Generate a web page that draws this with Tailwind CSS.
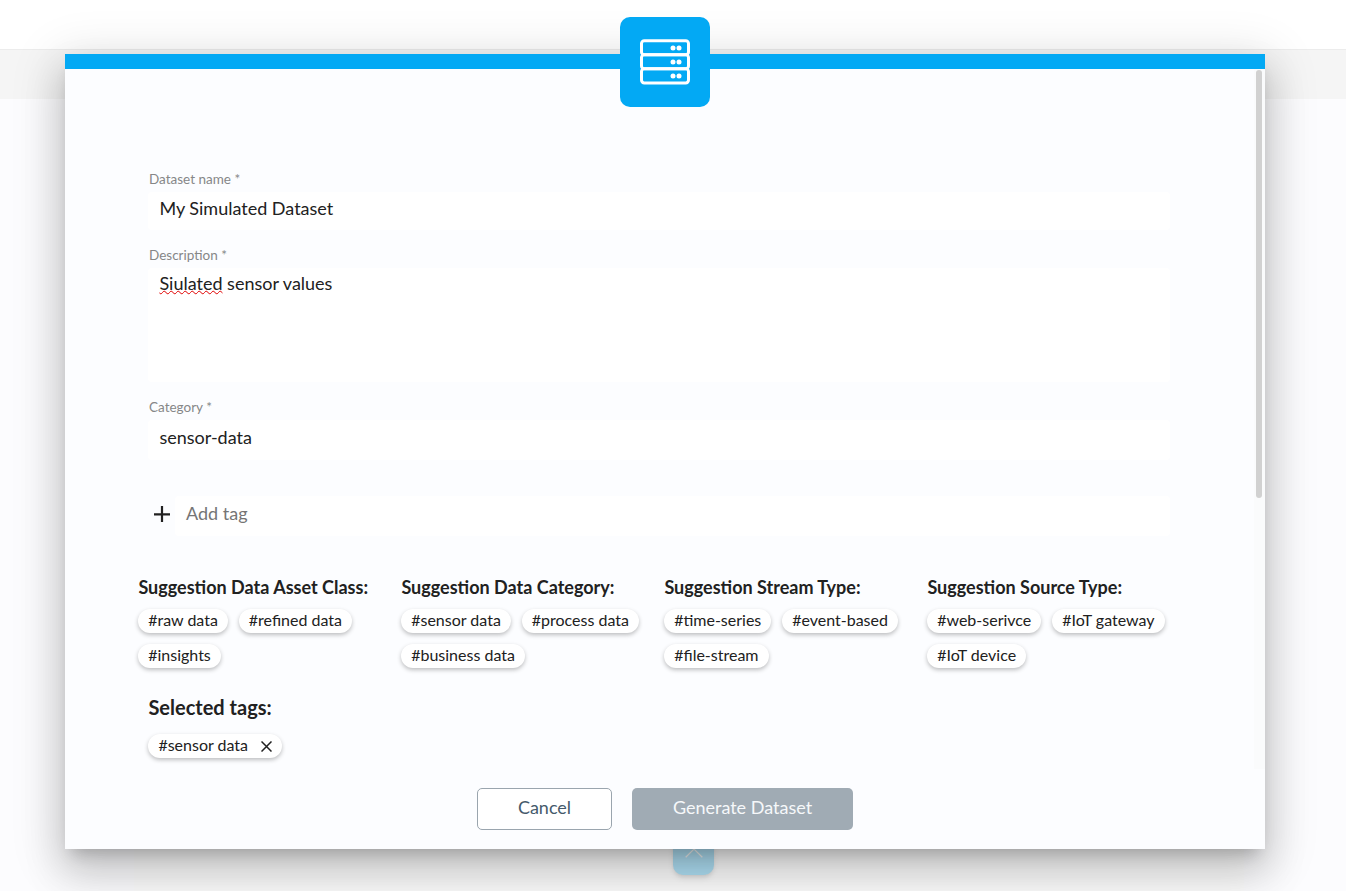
<!DOCTYPE html>
<html lang="en">
<head>
<meta charset="utf-8">
<title>Generate Dataset</title>
<script src="https://cdn.jsdelivr.net/npm/@tailwindcss/browser@4"></script>
</head>
<body class="relative h-[891px] w-[1346px] overflow-hidden bg-[#fcfcfe] font-['Lato',sans-serif] text-[#212121] antialiased">
  <!-- Page behind the dialog -->
  <div class="flex h-full flex-col">
    <div class="h-[50px] border-b border-[#ececec] bg-white"></div>
    <div class="h-[49px] bg-[#f5f5f5]"></div>
    <div class="mx-auto mt-[620px] w-[1110px] flex-1 translate-x-[16px] bg-[#fcfcfc]"></div>
  </div>
  <div class="absolute left-[673px] top-[834px] flex h-[41px] w-[41px] justify-center rounded-[10px] bg-[#afe0f5] shadow-md">
    <svg class="mt-[14px] h-[10px] w-[18px]" viewBox="0 0 18 10" fill="none" stroke="#f4f4f4" stroke-width="1.200"><path d="M0.7 9.2 9 1l8.300 8.200"/></svg>
  </div>

  <!-- Dialog -->
  <section class="absolute left-[65px] top-[54px] flex h-[795px] w-[1200px] flex-col bg-[#fcfdff] shadow-[0_11px_15px_-7px_rgba(0,0,0,0.2),0_24px_38px_3px_rgba(0,0,0,0.14),0_9px_46px_8px_rgba(0,0,0,0.12)]">
    <div class="h-[15px] shrink-0 bg-[#03a9f4]"></div>
    <div class="absolute left-[555px] top-[-37px] flex size-[90px] items-center justify-center rounded-[10px] bg-[#03a9f4]">
      <svg class="h-[46px] w-[50px]" viewBox="0 0 50 46" fill="none" stroke="#fff" stroke-width="3">
        <rect x="1.500" y="1.700" width="47" height="14" rx="2.800"/>
        <rect x="1.500" y="15.700" width="47" height="14" rx="2.800"/>
        <rect x="1.500" y="29.700" width="47" height="14.200" rx="2.800"/>
        <g fill="#fff" stroke="none"><circle cx="33" cy="9" r="2.500"/><circle cx="39" cy="9" r="2.500"/><circle cx="33" cy="23" r="2.500"/><circle cx="39" cy="23" r="2.500"/><circle cx="33" cy="37" r="2.500"/><circle cx="39" cy="37" r="2.500"/></g>
      </svg>
    </div>

    <div class="flex h-[700px] shrink-0">
      <div class="flex w-[1189px] flex-col pl-[73px] pt-[101px]">
        <div class="ml-[10px] flex w-[1022px] flex-col">
          <label class="h-[22px] pl-px text-[13.500px] leading-[18px] text-[#868788]">Dataset name *</label>
          <div class="h-[38px] rounded bg-white pl-[11.400px] text-[18px] leading-[33px]">My Simulated Dataset</div>
          <label class="mt-[16px] h-[22px] pl-px text-[13.500px] leading-[18px] text-[#868788]">Description *</label>
          <div class="h-[114px] rounded bg-white pl-[11.400px] text-[18px] leading-[30px]"><span class="underline decoration-[#e00000] decoration-wavy decoration-1 underline-offset-[0px] [text-decoration-skip-ink:none]">Siulated</span> sensor values</div>
          <label class="mt-[16px] h-[22px] pl-px text-[13.500px] leading-[18px] text-[#868788]">Category *</label>
          <div class="h-[40px] rounded bg-white pl-[11.400px] text-[18px] leading-[35px]">sensor-data</div>
          <div class="mt-[36px] flex h-[40px]">
            <svg class="ml-[6px] mr-[5px] mt-[10px] size-[16px]" viewBox="0 0 16 16" stroke="#212121" stroke-width="2.200"><path d="M8 0v16M0 8.300h16"/></svg>
            <div class="flex-1 rounded bg-white pl-[11px] text-[18px] leading-[35px] text-[#757575]">Add tag</div>
          </div>
        </div>

        <div class="mt-[40px] grid w-[1052px] grid-cols-4">
          <div>
            <h3 class="whitespace-nowrap pl-[0.400px] text-[18px] font-bold leading-[22px]">Suggestion Data Asset Class:</h3>
            <div class="mt-[11px] flex flex-wrap gap-x-[10.500px] gap-y-[11px] text-[16px] leading-[22px]">
              <span class="h-[24px] rounded-full bg-white px-[10.200px] shadow-[0_2px_4px_rgba(0,0,0,0.25)]">#raw data</span>
              <span class="h-[24px] rounded-full bg-white px-[10.200px] shadow-[0_2px_4px_rgba(0,0,0,0.25)]">#refined data</span>
              <span class="h-[24px] rounded-full bg-white px-[10.200px] shadow-[0_2px_4px_rgba(0,0,0,0.25)]">#insights</span>
            </div>
          </div>
          <div>
            <h3 class="whitespace-nowrap pl-[0.400px] text-[18px] font-bold leading-[22px]">Suggestion Data Category:</h3>
            <div class="mt-[11px] flex flex-wrap gap-x-[10.500px] gap-y-[11px] text-[16px] leading-[22px]">
              <span class="h-[24px] rounded-full bg-white px-[10.200px] shadow-[0_2px_4px_rgba(0,0,0,0.25)]">#sensor data</span>
              <span class="h-[24px] rounded-full bg-white px-[10.200px] shadow-[0_2px_4px_rgba(0,0,0,0.25)]">#process data</span>
              <span class="h-[24px] rounded-full bg-white px-[10.200px] shadow-[0_2px_4px_rgba(0,0,0,0.25)]">#business data</span>
            </div>
          </div>
          <div>
            <h3 class="whitespace-nowrap pl-[0.400px] text-[18px] font-bold leading-[22px]">Suggestion Stream Type:</h3>
            <div class="mt-[11px] flex flex-wrap gap-x-[10.500px] gap-y-[11px] text-[16px] leading-[22px]">
              <span class="h-[24px] rounded-full bg-white px-[10.200px] shadow-[0_2px_4px_rgba(0,0,0,0.25)]">#time-series</span>
              <span class="h-[24px] rounded-full bg-white px-[10.200px] shadow-[0_2px_4px_rgba(0,0,0,0.25)]">#event-based</span>
              <span class="h-[24px] rounded-full bg-white px-[10.200px] shadow-[0_2px_4px_rgba(0,0,0,0.25)]">#file-stream</span>
            </div>
          </div>
          <div>
            <h3 class="whitespace-nowrap pl-[0.400px] text-[18px] font-bold leading-[22px]">Suggestion Source Type:</h3>
            <div class="mt-[11px] flex flex-wrap gap-x-[10.500px] gap-y-[11px] text-[16px] leading-[22px]">
              <span class="h-[24px] rounded-full bg-white px-[10.200px] shadow-[0_2px_4px_rgba(0,0,0,0.25)]">#web-serivce</span>
              <span class="h-[24px] rounded-full bg-white px-[10.200px] shadow-[0_2px_4px_rgba(0,0,0,0.25)]">#IoT gateway</span>
              <span class="h-[24px] rounded-full bg-white px-[10.200px] shadow-[0_2px_4px_rgba(0,0,0,0.25)]">#IoT device</span>
            </div>
          </div>
        </div>

        <h2 class="ml-[10px] mt-[26px] pl-[0.400px] text-[20px] font-bold leading-[26px]">Selected tags:</h2>
        <div class="ml-[10px] mt-[14px] flex h-[24px] w-[134px] shrink-0 items-start justify-between rounded-full bg-white pl-[10.400px] pr-[10px] text-[16px] leading-[22px] shadow-[0_2px_4px_rgba(0,0,0,0.25)]">
          <span>#sensor data</span>
          <svg class="mt-[7px] size-[11px]" viewBox="0 0 11 11" stroke="#212121" stroke-width="1.500"><path d="M.5.500l10 10M10.500.500l-10 10"/></svg>
        </div>
      </div>
      <div class="w-[11px] bg-[#fafbfc] pl-[2px] pt-px">
        <div class="h-[428px] w-[6px] rounded-full bg-[#d1d1d1]"></div>
      </div>
    </div>

    <div class="flex justify-center gap-[20px] pt-[19px]">
      <div class="h-[42px] w-[135px] rounded-[5px] border border-[#9aa5ae] bg-white text-center text-[18px] leading-[36px] text-[#455a6b]">Cancel</div>
      <div class="h-[42px] w-[221px] rounded-[5px] bg-[#a0abb4] text-center text-[18px] leading-[38px] text-[#f6f8fa]">Generate Dataset</div>
    </div>
  </section>
</body>
</html>
